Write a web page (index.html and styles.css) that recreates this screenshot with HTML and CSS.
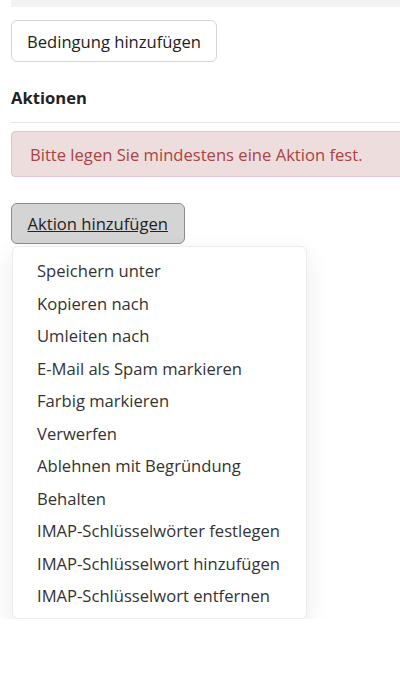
FILE: index.html
```html
<!DOCTYPE html>
<html lang="de">
<head>
<meta charset="utf-8">
<link rel="stylesheet" href="styles.css">
</head>
<body>
<div class="page">
  <div class="topbar"></div>
  <button class="btn btn-light">Bedingung hinzufügen</button>
  <h3 class="section-title">Aktionen</h3>
  <div class="alert">Bitte legen Sie mindestens eine Aktion fest.</div>
  <div class="dropdown">
    <button class="btn btn-active">Aktion hinzufügen</button>
    <ul class="menu">
      <li>Speichern unter</li>
      <li>Kopieren nach</li>
      <li>Umleiten nach</li>
      <li>E-Mail als Spam markieren</li>
      <li>Farbig markieren</li>
      <li>Verwerfen</li>
      <li>Ablehnen mit Begründung</li>
      <li>Behalten</li>
      <li>IMAP-Schlüsselwörter festlegen</li>
      <li>IMAP-Schlüsselwort hinzufügen</li>
      <li>IMAP-Schlüsselwort entfernen</li>
    </ul>
  </div>
</div>
</body>
</html>
```
FILE: styles.css
```css
html, body {
  margin: 0;
  padding: 0;
  background: #fff;
  overflow: hidden;
}
body {
  font-family: "Open Sans", "Noto Sans", sans-serif;
  font-size: 16.6px;
  color: #222;
}
.page {
  margin-left: 11px;
  width: 420px;
  display: flex;
  flex-direction: column;
  align-items: flex-start;
}
.topbar {
  width: 100%;
  height: 7px;
  background: #f2f2f2;
  margin-bottom: 13px;
}
.btn {
  font-family: inherit;
  font-size: 16.6px;
  height: 42px;
  padding: 0 15px;
  border-radius: 6px;
  color: #222;
  cursor: pointer;
}
.btn-light {
  background: #fff;
  border: 1px solid #d5d5d5;
}
.section-title {
  margin: 25px 0 0;
  font-size: 16.6px;
  font-weight: 700;
  line-height: 22px;
  padding-bottom: 13px;
  border-bottom: 1px solid #e6e6e6;
  width: 100%;
}
.alert {
  margin-top: 8px;
  width: 100%;
  box-sizing: border-box;
  height: 46px;
  display: flex;
  align-items: center;
  padding: 0 18px;
  background: #eddddd;
  border: 1px solid #e3c4c8;
  border-radius: 4px;
  color: #a94442;
}
.dropdown {
  margin-top: 26px;
  display: flex;
  flex-direction: column;
  align-items: flex-start;
}
.btn-active {
  height: 41px;
  background: #d4d4d4;
  border: 1px solid #8c8c8c;
  text-decoration: underline;
  padding: 0 15.5px;
}
.menu {
  list-style: none;
  margin: 2px 0 0 1px;
  padding: 8px 0 5px;
  width: 295px;
  box-sizing: border-box;
  background: #fff;
  border: 1px solid #ececec;
  border-radius: 6px;
  box-shadow: 0 8px 24px rgba(0, 0, 0, 0.09);
}
.menu li {
  padding: 0 24px;
  height: 32.5px;
  line-height: 32.5px;
  color: #333;
  white-space: nowrap;
}
```
